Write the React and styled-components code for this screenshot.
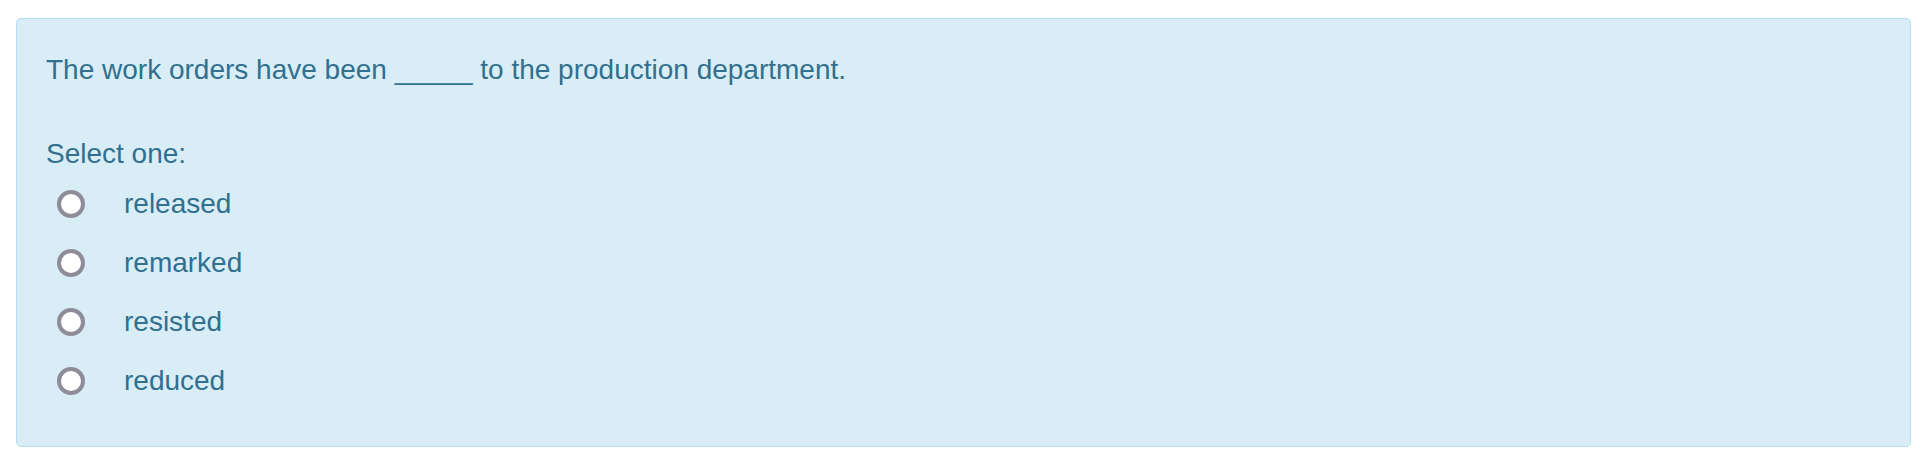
import React, { useState } from "react";
import styled, { createGlobalStyle } from "styled-components";

const GlobalStyle = createGlobalStyle`
  html, body {
    margin: 0;
    padding: 0;
    background: #ffffff;
  }
  body {
    font-family: "Liberation Sans", Arial, sans-serif;
  }
`;

const Page = styled.div`
  padding: 18px 19px 12px 16px;
`;

const QuestionCard = styled.div`
  background: #d9edf7;
  border: 1px solid #badcf0;
  border-radius: 5px;
  padding: 30px 30px 35px 29px;
  color: #31708f;
  font-size: 28px;
  line-height: 42px;
`;

const QuestionText = styled.p`
  margin: 0 0 42px 0;
`;

const Prompt = styled.div`
  margin: 0;
`;

const AnswerList = styled.div`
  display: flex;
  flex-direction: column;
`;

const AnswerRow = styled.label`
  display: flex;
  align-items: center;
  height: 59px;
  line-height: 59px;
  margin-top: -1px;
  margin-bottom: 1px;
  cursor: pointer;
`;

const RadioCircle = styled.span`
  box-sizing: border-box;
  width: 28px;
  height: 28px;
  margin: 0 39px 0 11px;
  border-radius: 50%;
  border: 4px solid #8e8c99;
  background: ${(p) => (p.checked ? "#31708f" : "#ffffff")};
  box-shadow: ${(p) => (p.checked ? "inset 0 0 0 5px #ffffff" : "none")};
  flex-shrink: 0;
`;

const AnswerLabel = styled.span`
  white-space: nowrap;
`;

const answers = ["released", "remarked", "resisted", "reduced"];

export default function App() {
  const [picked, setPicked] = useState(null);

  return (
    <Page>
      <GlobalStyle />
      <QuestionCard>
        <QuestionText>
          The work orders have been _____ to the production department.
        </QuestionText>
        <Prompt>Select one:</Prompt>
        <AnswerList>
          {answers.map((answer, id) => (
            <AnswerRow key={answer} onClick={() => setPicked(id)}>
              <RadioCircle checked={picked === id} />
              <AnswerLabel>{answer}</AnswerLabel>
            </AnswerRow>
          ))}
        </AnswerList>
      </QuestionCard>
    </Page>
  );
}
